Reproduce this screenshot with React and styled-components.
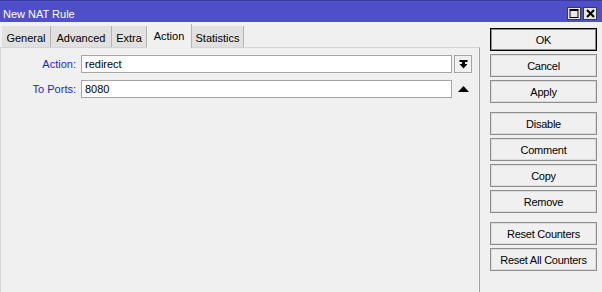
import React from 'react'
import styled, { createGlobalStyle } from 'styled-components'

const GlobalStyle = createGlobalStyle`
  html, body {
    margin: 0;
    padding: 0;
    background: #f0f0f0;
  }
  body {
    font-family: "Liberation Sans", Arial, sans-serif;
    font-size: 11px;
    color: #000;
  }
`

const Window = styled.div`
  width: 602px;
  height: 292px;
  display: flex;
  flex-direction: column;
  background: #f0f0f0;
  overflow: hidden;
`

const TitleBar = styled.div`
  height: 22px;
  box-sizing: border-box;
  background: #4f4fca;
  border-top: 1px solid #3a3aa0;
  display: flex;
  align-items: flex-start;
  justify-content: space-between;
  padding: 0 5px 0 3px;
`

const Title = styled.div`
  color: #fff;
  line-height: 13px;
  padding-top: 7px;
`

const WinButtons = styled.div`
  display: flex;
  gap: 2px;
  padding-top: 6px;
`

const WinButton = styled.div`
  width: 14px;
  height: 13px;
  box-sizing: border-box;
  background: #e6e6e6;
  border: 1px solid #3a3a3a;
  display: flex;
  align-items: center;
  justify-content: center;
`

const Body = styled.div`
  flex: 1;
  display: flex;
`

const Main = styled.div`
  width: 480px;
  display: flex;
  flex-direction: column;
`

const TabStrip = styled.div`
  height: 25px;
  display: flex;
  align-items: flex-end;
  padding-left: 2px;
`

const Tab = styled.div`
  position: relative;
  z-index: 1;
  width: ${p => p.w}px;
  height: ${p => (p.active ? 24 : 21)}px;
  margin-bottom: ${p => (p.active ? -1 : 0)}px;
  box-sizing: border-box;
  background: ${p => (p.active ? '#f0f0f0' : '#e1e1e1')};
  border-right: 1px solid #b4b4b4;
  text-align: center;
  line-height: 20px;
  padding-top: 2px;
  white-space: nowrap;
`

const Panel = styled.div`
  flex: 1;
  border-top: 1px solid #d4d4d4;
  border-left: 1px solid #d4d4d4;
  border-right: 1px solid #a0a0a0;
  padding-top: 7px;
  display: flex;
  flex-direction: column;
  gap: 7px;
`

const Row = styled.div`
  display: flex;
  align-items: center;
  height: 18px;
`

const Label = styled.div`
  width: 75px;
  margin-right: 5px;
  text-align: right;
  color: #1c1ce0;
  line-height: 18px;
`

const Field = styled.div`
  width: 371px;
  height: 18px;
  box-sizing: border-box;
  background: #fff;
  border: 1px solid #a5a5a5;
  padding-left: 3px;
  line-height: 16px;
`

const Side = styled.div`
  width: 18px;
  height: 18px;
  margin-left: 2px;
  box-sizing: border-box;
  display: flex;
  align-items: center;
  justify-content: center;
  background: ${p => (p.boxed ? '#f0f0f0' : 'transparent')};
  border: 1px solid ${p => (p.boxed ? '#a5a5a5' : 'transparent')};
`

const Actions = styled.div`
  flex: 1;
  display: flex;
  flex-direction: column;
  padding: 6px 5px 0 10px;
`

const Group = styled.div`
  display: flex;
  flex-direction: column;
  gap: 3px;
  margin-bottom: 9px;
`

const Button = styled.div`
  height: 23px;
  box-sizing: border-box;
  background: #f0f0f0;
  border: 1px solid ${p => (p.primary ? '#000' : '#8e8e8e')};
  box-shadow: inset 0 0 0 1px ${p => (p.primary ? '#8e8e8e' : '#dcdcdc')};
  display: flex;
  align-items: center;
  justify-content: center;
  letter-spacing: -0.25px;
  white-space: nowrap;
`

const tabs = [
  { name: 'General', w: 49 },
  { name: 'Advanced', w: 61 },
  { name: 'Extra', w: 35 },
  { name: 'Action', w: 45, active: true },
  { name: 'Statistics', w: 52 },
]

const groups = [
  ['OK', 'Cancel', 'Apply'],
  ['Disable', 'Comment', 'Copy', 'Remove'],
  ['Reset Counters', 'Reset All Counters'],
]

const DropIcon = () => (
  <svg width="9" height="9" viewBox="0 0 9 9">
    <rect x="0.5" y="0" width="8" height="2" fill="#000" />
    <rect x="3" y="2" width="3" height="2" fill="#000" />
    <polygon points="0.5,4 8.5,4 4.5,8.5" fill="#000" />
  </svg>
)

const UpIcon = () => (
  <svg width="11" height="6" viewBox="0 0 11 6">
    <polygon points="0,6 11,6 5.5,0" fill="#000" />
  </svg>
)

export default function App() {
  return (
    <Window>
      <GlobalStyle />
      <TitleBar>
        <Title>New NAT Rule</Title>
        <WinButtons>
          <WinButton>
            <svg width="10" height="9" viewBox="0 0 10 9">
              <rect x="1" y="0.5" width="8" height="8" fill="none" stroke="#000" strokeWidth="1" />
              <rect x="1" y="0" width="8" height="2" fill="#000" />
            </svg>
          </WinButton>
          <WinButton>
            <svg width="9" height="9" viewBox="0 0 9 9">
              <path d="M1 1 L8 8 M8 1 L1 8" stroke="#000" strokeWidth="2" />
            </svg>
          </WinButton>
        </WinButtons>
      </TitleBar>
      <Body>
        <Main>
          <TabStrip>
            {tabs.map(t => (
              <Tab key={t.name} w={t.w} active={t.active}>{t.name}</Tab>
            ))}
          </TabStrip>
          <Panel>
            <Row>
              <Label>Action:</Label>
              <Field>redirect</Field>
              <Side boxed><DropIcon /></Side>
            </Row>
            <Row>
              <Label>To Ports:</Label>
              <Field>8080</Field>
              <Side><UpIcon /></Side>
            </Row>
          </Panel>
        </Main>
        <Actions>
          {groups.map((g, i) => (
            <Group key={i}>
              {g.map(b => (
                <Button key={b} primary={b === 'OK'}>{b}</Button>
              ))}
            </Group>
          ))}
        </Actions>
      </Body>
    </Window>
  )
}
